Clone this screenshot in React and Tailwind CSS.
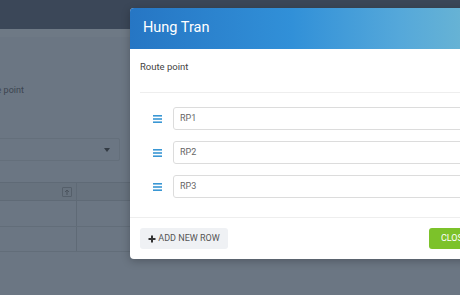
import React from "react";

function Bars() {
  return (
    <svg width="9" height="8" viewBox="0 0 9 8" className="block">
      <rect x="0" y="0" width="9" height="1.6" fill="#3a97d4" />
      <rect x="0" y="3.2" width="9" height="1.6" fill="#3a97d4" />
      <rect x="0" y="6.4" width="9" height="1.6" fill="#3a97d4" />
    </svg>
  );
}

export default function App() {
  const rows = ["RP1", "RP2", "RP3"];
  return (
    <div className="relative w-[460px] h-[295px] overflow-hidden bg-[#6b7683]" style={{ fontFamily: "Roboto, 'Liberation Sans', sans-serif" }}>
      {/* background page */}
      <div className="h-[29px] bg-[#3b4758]" />
      <div className="h-[8px] bg-[#6e7985]" />
      <div className="ml-[-24px] w-[144px]">
        <div className="pt-[47px] pl-[2px] text-[9px] text-[#3c4550] leading-[12px]">Route point</div>
        <div className="mt-[42px] h-[23px] border border-[#646f7b] rounded-[2px] flex items-center justify-end pr-[9px]">
          <svg width="6" height="4" viewBox="0 0 6 4"><path d="M0 0h6L3 4z" fill="#333b44" /></svg>
        </div>
      </div>
      <div className="mt-[21px] w-[140px] border-t border-[#5f6a76]">
        <div className="flex h-[18px] bg-[#67727e] border-b border-[#5f6a76]">
          <div className="w-[77px] border-r border-[#5f6a76] flex items-center justify-end pr-[4px]">
            <div className="w-[10px] h-[10px] border border-[#555f6a] rounded-[1px] flex items-center justify-center">
              <svg width="6" height="6" viewBox="0 0 6 6"><path d="M1 3L3 1L5 3M3 1v5" stroke="#4a535d" strokeWidth="1" fill="none" /></svg>
            </div>
          </div>
        </div>
        <div className="flex h-[26px] border-b border-[#626d79]"><div className="w-[77px] border-r border-[#5f6a76]" /></div>
        <div className="flex h-[25px] border-b border-[#626d79]"><div className="w-[77px] border-r border-[#5f6a76]" /></div>
      </div>

      {/* modal */}
      <div className="absolute left-[130px] top-[8px] w-[360px] bg-white rounded-[4px] overflow-hidden shadow-[0_2px_8px_rgba(0,0,0,0.25)]">
        <div className="h-[41px] flex items-center pl-[13px] bg-[linear-gradient(90deg,#2676c4_0%,#3190d8_45%,#55a8da_75%,#6fb8d2_100%)]">
          <span className="text-white text-[14.5px] leading-none">Hung Tran</span>
        </div>
        <div className="px-[10px]">
          <div className="pt-[12px] pb-[19px] text-[9.5px] leading-[12px] text-[#444] border-b border-[#eeeeee]">Route point</div>
          <div className="pt-[14px] pb-[19px] flex flex-col gap-[11px]">
            {rows.map((r) => (
              <div key={r} className="flex items-center">
                <div className="w-[33px] flex justify-center pl-[2px]"><Bars /></div>
                <div className="flex-1 h-[23px] border border-[#dcdcdc] rounded-[3px] flex items-center pl-[6px] text-[9px] text-[#666]">{r}</div>
              </div>
            ))}
          </div>
        </div>
        <div className="border-t border-[#eeeeee] px-[10px] pt-[10px] pb-[10px] flex justify-between">
          <div className="h-[21px] w-[88px] rounded-[3px] bg-[#eff1f4] flex items-center justify-center gap-[2px] text-[9px] text-[#555]">
            <svg width="8" height="8" viewBox="0 0 8 8"><path d="M4 0.5v7M0.5 4h7" stroke="#333" strokeWidth="2" /></svg>
            <span>ADD NEW ROW</span>
          </div>
          <div className="h-[21px] w-[51px] rounded-[3px] bg-[#7cc22a] flex items-center justify-center text-[9px] text-white">CLOSE</div>
        </div>
      </div>
    </div>
  );
}
